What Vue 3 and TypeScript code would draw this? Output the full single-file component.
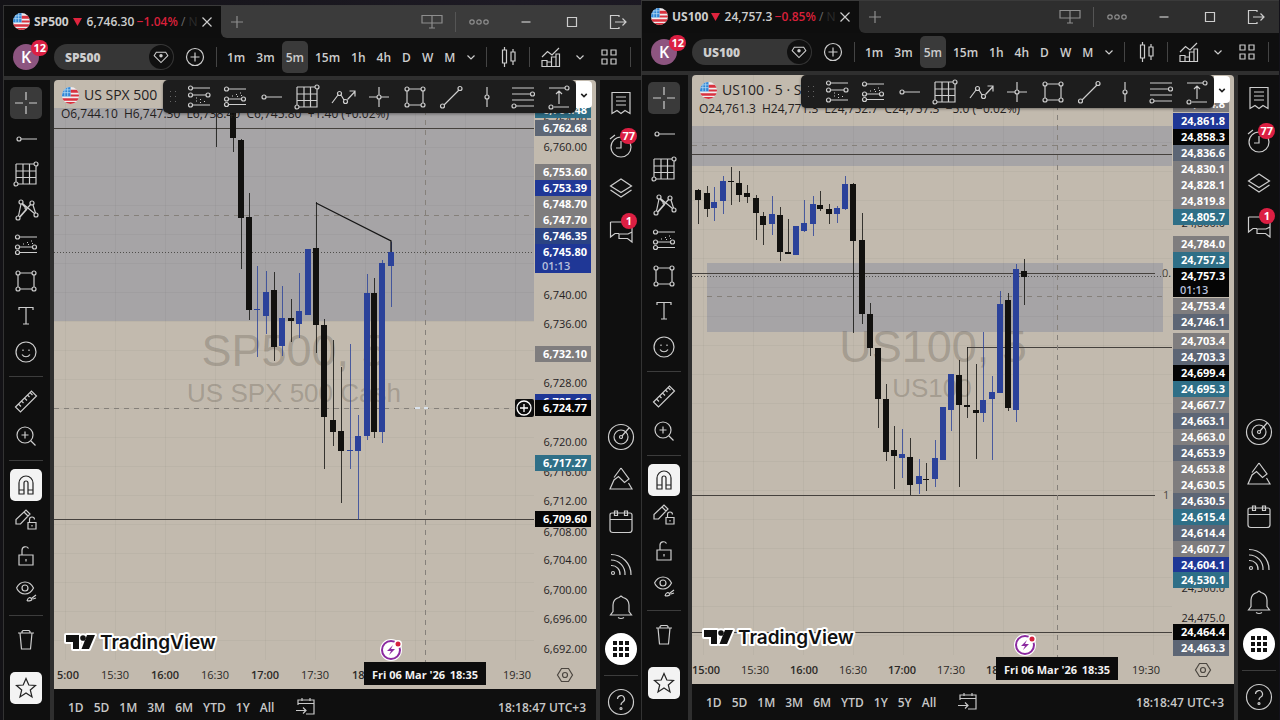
<script setup lang="ts">
type Tone = 'plain' | 'slate' | 'gray' | 'blue' | 'navy' | 'teal' | 'black'
type Candle = [x: number, top: number, bottom: number, high: number, low: number, up: 0 | 1]
interface PriceTag { y: number; text: string; tone: Tone; timer?: string }
interface HLine { y: number; from: number; to: number; kind: 'solid' | 'dashed' | 'dotted' }
interface Pane {
  id: string
  symbol: string
  price: string
  change: string
  title: string
  ohlc: string
  x: number
  y: number
  zones: { x: number; y: number; w: number; h: number }[]
  lines: HLine[]
  candles: Candle[]
  tags: PriceTag[]
  mark: { text: string; x: number; y: number }[]
  times: { x: number; text: string }[]
  notes: { x: number; y: number; text: string }[]
  ranges: string[]
  cursorX: number
  trend?: string
}

const ring = (x: number, y: number, r: number): string =>
  `M${x - r} ${y}a${r} ${r} 0 1 0 ${2 * r} 0a${r} ${r} 0 1 0 ${-2 * r} 0`

const icons: Record<string, string> = {
  cross: 'M14 3v8M14 17v8M3 14h8M17 14h8',
  ray: ring(7, 14, 2) + 'M9 14H25',
  grid: 'M4 4H22M24 6V24H6M4 22V4M11 4V24M17.500 4V24M4 11H24M4 17.500H24' + ring(24, 4, 2) + ring(4, 24, 2),
  xabcd: 'M6.500 20L9 8M8 20.500L18.500 8.500M10.500 7.500L22.500 17.500M21 9L23.500 17M10 8L13 11M15 13L8 21' + ring(6, 22, 2) + ring(9, 6, 2) + ring(20, 7, 2) + ring(24, 19, 2) + ring(14, 12, 1),
  channel: 'M7.500 6H25M7.500 16H20.500M7.500 21.500H25M11 13h1M15 11.500h1M19 10h1M16 13.500h1M20 12.500h1' + ring(5.5, 6, 2) + ring(5.5, 16, 2) + ring(22.5, 16, 2) + ring(5.5, 21.5, 2),
  retrace: 'M7.500 5H25M7.500 12H21M7.500 22H25M11 15h1M15 16.500h1M19 18.500h1M11 18h1M15 19.500h1' + ring(5.5, 5, 2) + ring(5.5, 12, 2) + ring(23, 12, 2) + ring(5.5, 22, 2),
  rect: 'M8 6H20M22 8V20M20 22H8M6 20V8' + ring(6, 6, 2) + ring(22, 6, 2) + ring(22, 22, 2) + ring(6, 22, 2),
  text: 'M7 8V5.500H21V8M14 5.500V22M11 22H17',
  smile: ring(14, 14, 10) + 'M11 11.500v1.500M17 11.500v1.500M10 16.500c2 3 6 3 8 0',
  ruler: 'M3.500 20L19.500 4L24.500 9L8.500 25ZM6.500 17l2.500 2.500M9.500 14l2 2M12.500 11l2.500 2.500M15.500 8l2 2M18 5.500l2.500 2.500',
  zoom: ring(13, 13, 8) + 'M13 9.500v7M9.500 13h7M19 19l4.500 4.500',
  magnet: 'M7 23V12a7 7 0 0 1 14 0V23H16V12a2 2 0 0 0-4 0V23ZM7 19h5M16 19h5',
  penlock: 'M4 18V13.500L14 4L18 8L8.500 18ZM12 6L16 10M16 16.500h8v6.500h-8zM17.500 16.500v-3a2.500 2.500 0 0 1 5 0M20 19v1.500',
  lock: 'M7 13h14v10H7zM10 13V8.500a3.500 3.500 0 0 1 6.500-2M14 17v2.500',
  eye: 'M4.500 11c4-8 13-8 17 0c-4 8-13 8-17 0' + ring(13, 11, 3) + 'M15 24c1-4 3-4 5-2c0 2-3 2-5 2M20 21l4-3M21 22l3-1',
  trash: 'M6 7H22M10 7V5.500L11 4.500H17L18 5.500V7M8 7L9.500 23H18.500L20 7',
  star: 'M14 4.500L16.800 11L23.500 11.500L18.300 16L20 23L14 19L8 23L9.700 16L4.500 11.500L11.200 11Z',
  path: 'M3 20L9 12M12 12L15 17M18.500 16.500L26 8.500M20.500 8H26V13.500' + ring(10.5, 10.5, 2) + ring(16.5, 18.5, 2),
  plusring: ring(14, 14, 2) + 'M14 4v8M14 16v8M4 14h8M16 14h8',
  trend: 'M7 22L22 7' + ring(5.5, 23, 2) + ring(23, 5.5, 2),
  vline: 'M14 4V12M14 16V24' + ring(14, 14, 2),
  levels: 'M3 5H25M3 11H21.500M3 17H25M7 23H25' + ring(23.5, 11, 2) + ring(5, 23, 2),
  longpos: 'M4 5H20M9 24H24M14 21V8M11 11L14 8L17 11' + ring(22, 5, 2) + ring(6, 24, 2),
  note: 'M5 3.500H23V24.500L18 21.500L14 24.500L10 21.500L5 24.500ZM9 8H19M9 12H19M9 16H19',
  alarm: ring(14, 15, 10) + 'M14 9V16H9M3 7L8 3',
  layers: 'M3.500 12L14 5L24.500 12L14 18.500ZM3.500 16L14 23L24.500 16',
  chat: 'M3.500 5H20V11M3.500 5V20L8 16.500H12M25 11V25L20.500 21.500H12V17H21L25 15',
  radar: ring(14, 14, 12.5) + ring(14, 14, 7) + ring(14, 14, 1.5) + 'M15 13L22 5',
  ideas: 'M14 3L22 14L17.500 17.500L11.500 11.500L7 15L3 24H25L21.500 18M14 3L7 12.500',
  calendar: 'M3 7Q3 5 5 5H23Q25 5 25 7V22Q25 24.500 22 24.500H6Q3 24.500 3 22ZM3 11.500H25M7.500 3h3v4.500h-3zM17.500 3h3v4.500h-3z',
  rss: ring(6, 23, 1.5) + 'M4 15.500a8.500 8.500 0 0 1 9 9.500M4 10a14 14 0 0 1 14 15M4 4.500a20 20 0 0 1 20 20.500',
  bell: 'M3.500 22H24.500L22 18.500V12a8 8 0 0 0-6-7.500L14 3L12 4.500A8 8 0 0 0 6 12V18.500ZM11 24.500q3 2 6 0',
  help: ring(14, 14, 12.5) + 'M10.500 11a3.500 3.500 0 1 1 5 3.200Q14 15 14 17' + ring(14, 20.5, 1),
  add: ring(14, 14, 8.5) + 'M14 9.500v9M9.500 14h9',
  gem: 'M8.500 8.500H19.500L22 12.500L14 20.500L6 12.500Z',
  candles: 'M8.500 7H12.500V20H8.500ZM10.500 4V7M10.500 20V24M17 9H21V18H17ZM19 6V9M19 18V22',
  indicator: 'M5 23.500V17.500H10V23.500ZM10 23.500V19H14.500V23.500M14.500 19V14H19V23.500M19 14V11H22.500V23.500H10M5 14L10.500 8.500L15 12L22 5',
  apps: 'M7 7h5v5h-5zM16 7h5v5h-5zM7 16h5v5h-5zM16 16h5v5h-5z',
  layout: 'M4 7.500H24V15H4ZM14 7.500V20M11 20H17',
  dots: ring(7, 14, 2.2) + ring(14, 14, 2.2) + ring(21, 14, 2.2),
  minus: 'M9.500 14H18.500',
  square: 'M9.500 9.500h9v9h-9z',
  exit: 'M15 9V7.500H6.500V20.500H15V19M11 14H22M18.500 10.500L22 14L18.500 17.500',
  down: 'M10.500 12.500L14 16L17.500 12.500',
  close: 'M9.500 9.500L18.500 18.500M18.500 9.500L9.500 18.500',
  plus: 'M14 8v12M8 14h12',
  goto: 'M6 12V7H22V21H14M6 10.500H22M10 5V8M18 5V8M4 17.500H14M11 14.500L14 17.500L11 20.500',
  lens: 'M10.500 7.500H17.500L21.500 14L17.500 20.500H10.500L6.500 14Z' + ring(14, 14, 2.5),
  brand: 'M0 1H13V15H7V8H0ZM21 1H29L23 15H15.500Z' + ring(17, 4, 2.8),
}

const drawTools: string[][] = [
  ['cross', 'ray', 'grid', 'xabcd', 'channel', 'rect', 'text', 'smile'],
  ['ruler', 'zoom'],
  ['magnet', 'penlock', 'lock', 'eye'],
  ['trash'],
]
const favorites = ['retrace', 'channel', 'ray', 'grid', 'path', 'plusring', 'rect', 'trend', 'vline', 'levels', 'longpos']
const sideTop = [
  { icon: 'note', badge: '' },
  { icon: 'alarm', badge: '77' },
  { icon: 'layers', badge: '' },
  { icon: 'chat', badge: '1' },
]
const sideBottom = ['radar', 'ideas', 'calendar', 'rss', 'bell']
const intervals = ['1m', '3m', '5m', '15m', '1h', '4h', 'D', 'W', 'M']

const tag = (y: number, text: string, tone: Tone = 'plain', timer?: string): PriceTag => ({ y, text, tone, timer })

const panes: Pane[] = [
  {
    id: 'spx', symbol: 'SP500', price: '6,746.30', change: '−1.04%', title: 'US SPX 500',
    ohlc: 'O6,744.10  H6,747.30  L6,738.40  C6,745.80  +1.40 (+0.02%)',
    x: 54, y: 80,
    zones: [{ x: 54, y: 108, w: 480, h: 213 }],
    lines: [
      { y: 128, from: 54, to: 534, kind: 'solid' },
      { y: 215, from: 54, to: 534, kind: 'dashed' },
      { y: 252, from: 54, to: 534, kind: 'dotted' },
      { y: 408, from: 54, to: 514, kind: 'dashed' },
      { y: 519, from: 54, to: 534, kind: 'solid' },
    ],
    candles: [
      [216, 110, 111, 110, 147, 0], [233, 110, 138, 110, 152, 0], [241, 140, 218, 139, 269, 0],
      [249, 217, 310, 193, 320, 0], [257, 309, 310, 266, 357, 1], [266, 292, 316, 271, 334, 1],
      [274, 290, 347, 272, 361, 0], [282, 318, 346, 286, 356, 1], [291, 318, 321, 299, 342, 0],
      [299, 311, 324, 273, 338, 1], [308, 249, 315, 249, 315, 1], [316, 248, 325, 202, 353, 0],
      [324, 325, 417, 319, 469, 0], [333, 420, 432, 340, 446, 0], [341, 431, 451, 367, 503, 0],
      [350, 450, 451, 344, 469, 1], [358, 436, 451, 415, 520, 1], [367, 293, 436, 274, 440, 1],
      [374, 293, 432, 278, 438, 0], [382, 263, 432, 260, 443, 1], [391, 252, 266, 242, 307, 1],
    ],
    tags: [
      tag(120, '6,764.00'), tag(110, '6,764.48', 'teal'), tag(128, '6,762.68', 'slate'), tag(147, '6,760.00'),
      tag(172, '6,753.60', 'gray'), tag(188, '6,753.39', 'blue'), tag(204, '6,748.70', 'gray'),
      tag(220, '6,747.70', 'gray'), tag(236, '6,746.35', 'navy'), tag(252, '6,745.80', 'blue', '01:13'),
      tag(295, '6,740.00'), tag(324, '6,736.00'), tag(354, '6,732.10', 'gray'), tag(383, '6,728.00'),
      tag(402, '6,725.68', 'blue'), tag(408, '6,724.77', 'black'), tag(442, '6,720.00'), tag(472, '6,716.00'),
      tag(463, '6,717.27', 'teal'), tag(501, '6,712.00'), tag(532, '6,708.00'), tag(519, '6,709.60', 'black'),
      tag(560, '6,704.00'), tag(590, '6,700.00'), tag(619, '6,696.00'), tag(649, '6,692.00'),
    ],
    mark: [{ text: 'SP500, 5', x: 294, y: 366 }, { text: 'US SPX 500 Cash', x: 294, y: 402 }],
    times: [
      { x: 68, text: '5:00' }, { x: 115, text: '15:30' }, { x: 165, text: '16:00' }, { x: 215, text: '16:30' },
      { x: 265, text: '17:00' }, { x: 315, text: '17:30' }, { x: 366, text: '18:00' }, { x: 517, text: '19:30' },
    ],
    notes: [],
    ranges: ['1D', '5D', '1M', '3M', '6M', 'YTD', '1Y', 'All'],
    cursorX: 425,
    trend: 'M316 203L391 241V252',
  },
  {
    id: 'ndx', symbol: 'US100', price: '24,757.3', change: '−0.85%', title: 'US100 · 5 · S',
    ohlc: 'O24,761.3  H24,771.3  L24,752.7  C24,757.3  −5.0 (−0.02%)',
    x: 692, y: 75,
    zones: [{ x: 692, y: 126, w: 480, h: 40 }, { x: 707, y: 263, w: 456, h: 69 }],
    lines: [
      { y: 145, from: 692, to: 1172, kind: 'dashed' },
      { y: 154, from: 692, to: 1172, kind: 'solid' },
      { y: 273, from: 692, to: 1155, kind: 'solid' },
      { y: 276, from: 692, to: 1172, kind: 'dotted' },
      { y: 296, from: 707, to: 1163, kind: 'dashed' },
      { y: 347, from: 967, to: 1172, kind: 'solid' },
      { y: 495, from: 692, to: 1155, kind: 'solid' },
      { y: 632, from: 692, to: 1172, kind: 'solid' },
    ],
    candles: [
      [698, 190, 200, 189, 224, 0], [707, 193, 209, 186, 217, 0], [714, 202, 208, 187, 221, 1],
      [723, 181, 201, 176, 214, 1], [731, 181, 182, 167, 205, 0], [739, 183, 195, 171, 202, 0],
      [747, 193, 197, 185, 203, 0], [756, 198, 213, 195, 240, 0], [763, 216, 225, 212, 245, 0],
      [772, 214, 224, 196, 235, 1], [780, 215, 252, 207, 261, 0], [788, 252, 254, 219, 254, 0],
      [796, 226, 255, 226, 255, 1], [804, 223, 231, 200, 232, 1], [813, 204, 224, 196, 236, 1],
      [820, 205, 209, 191, 211, 0], [829, 209, 214, 204, 224, 0], [837, 208, 214, 206, 223, 1],
      [845, 184, 209, 176, 210, 1], [853, 184, 241, 183, 333, 0], [862, 240, 314, 213, 324, 0],
      [870, 314, 348, 303, 356, 0], [878, 348, 399, 348, 428, 0], [886, 399, 452, 384, 461, 0],
      [894, 450, 456, 426, 489, 0], [902, 454, 458, 429, 478, 1], [910, 457, 485, 438, 495, 0],
      [919, 476, 484, 459, 494, 1], [926, 479, 480, 463, 491, 0], [935, 458, 479, 440, 487, 1],
      [943, 407, 460, 407, 460, 1], [951, 374, 410, 374, 431, 1], [959, 375, 405, 360, 487, 0],
      [967, 405, 407, 347, 418, 0], [976, 410, 413, 364, 459, 0], [983, 400, 413, 332, 422, 1],
      [992, 392, 399, 376, 460, 1], [1000, 304, 393, 291, 393, 1], [1008, 300, 408, 293, 411, 0],
      [1016, 269, 410, 264, 422, 1], [1024, 271, 277, 259, 305, 0],
    ],
    tags: [
      tag(104, '24,874.8', 'gray'), tag(121, '24,861.8', 'blue'), tag(137, '24,858.3', 'black'), tag(153, '24,836.6', 'slate'),
      tag(169, '24,830.1', 'gray'), tag(185, '24,828.1', 'gray'), tag(201, '24,819.8', 'gray'),
      tag(223, '24,800.0'), tag(217, '24,805.7', 'teal'), tag(253, '24,775.0'), tag(244, '24,784.0', 'gray'),
      tag(260, '24,757.3', 'teal'), tag(276, '24,757.3', 'black', '01:13'), tag(306, '24,753.4', 'gray'),
      tag(322, '24,746.1', 'slate'), tag(341, '24,703.4', 'gray'), tag(357, '24,703.3', 'slate'),
      tag(373, '24,699.4', 'black'), tag(389, '24,695.3', 'teal'), tag(405, '24,667.7', 'gray'),
      tag(421, '24,663.1', 'slate'), tag(437, '24,663.0', 'gray'), tag(453, '24,653.9', 'slate'),
      tag(469, '24,653.8', 'gray'), tag(485, '24,630.5', 'gray'), tag(501, '24,630.5', 'slate'),
      tag(517, '24,615.4', 'teal'), tag(533, '24,614.4', 'slate'), tag(549, '24,607.7', 'gray'),
      tag(565, '24,604.1', 'blue'), tag(588, '24,500.0'), tag(580, '24,530.1', 'teal'),
      tag(618, '24,475.0'), tag(632, '24,464.4', 'black'), tag(648, '24,463.3', 'slate'),
    ],
    mark: [{ text: 'US100, 5', x: 933, y: 362 }, { text: 'US100', x: 932, y: 397 }],
    times: [
      { x: 706, text: '15:00' }, { x: 755, text: '15:30' }, { x: 804, text: '16:00' }, { x: 853, text: '16:30' },
      { x: 902, text: '17:00' }, { x: 951, text: '17:30' }, { x: 1000, text: '18:00' }, { x: 1146, text: '19:30' },
    ],
    notes: [{ x: 1162, y: 277, text: '0.' }, { x: 1163, y: 499, text: '1' }],
    ranges: ['1D', '5D', '1M', '3M', '6M', 'YTD', '1Y', '5Y', 'All'],
    cursorX: 1057,
  },
]
const rowsOfGrid = Array.from({ length: 18 }, (_, i) => i)
</script>

<template>
  <main class="desktop">
    <section v-for="p in panes" :key="p.id" class="pane" :class="p.id">
      <header class="tabs">
        <div class="tab">
          <svg class="flag" viewBox="0 0 18 18"><use href="#us-flag" /></svg>
          <b>{{ p.symbol }}</b>
          <svg class="fall" viewBox="0 0 10 10"><path d="M0 1H10L5 10Z" /></svg>
          <span class="quote">{{ p.price }}</span>
          <span class="loss">{{ p.change }}</span>
          <span class="rest">/ <i>N</i></span>
          <button class="ico" aria-label="Close tab"><svg viewBox="0 0 28 28"><path :d="icons.close" /></svg></button>
        </div>
        <div class="strip">
          <button class="ico dim" aria-label="New tab"><svg viewBox="0 0 28 28"><path :d="icons.plus" /></svg></button>
          <div class="window-tools">
            <button class="ico dim" aria-label="Layout"><svg viewBox="0 0 28 28"><path :d="icons.layout" /></svg></button>
            <i class="bar"></i>
            <button class="ico dim" aria-label="More"><svg viewBox="0 0 28 28"><path :d="icons.dots" /></svg></button>
            <button v-for="w in ['minus', 'square', 'exit']" :key="w" class="ico win" :aria-label="w">
              <svg viewBox="0 0 28 28"><path :d="icons[w]" /></svg>
            </button>
          </div>
        </div>
      </header>

      <nav class="toolbar">
        <button class="avatar">K<span class="badge">12</span></button>
        <button class="search">
          <b>{{ p.symbol }}</b>
          <span class="gem"><svg viewBox="0 0 28 28"><path :d="icons.gem" /><circle cx="14" cy="12.500" r="2" class="dot" /></svg></span>
        </button>
        <button class="ico" aria-label="Compare"><svg viewBox="0 0 28 28"><path :d="icons.add" /></svg></button>
        <i class="bar"></i>
        <div class="intervals">
          <button v-for="t in intervals" :key="t" :class="{ on: t === '5m' }">{{ t }}</button>
        </div>
        <div class="right-tools">
          <button class="ico slim" aria-label="Intervals"><svg viewBox="0 0 28 28"><path :d="icons.down" /></svg></button>
          <i class="bar"></i>
          <button class="ico" aria-label="Chart type"><svg viewBox="0 0 28 28"><path :d="icons.candles" /></svg></button>
          <i class="bar"></i>
          <button class="ico" aria-label="Indicators"><svg viewBox="0 0 28 28"><path :d="icons.indicator" /></svg></button>
          <button class="ico slim" aria-label="Templates"><svg viewBox="0 0 28 28"><path :d="icons.down" /></svg></button>
          <button class="ico" aria-label="Layouts"><svg viewBox="0 0 28 28"><path :d="icons.apps" /></svg></button>
          <i class="bar"></i>
        </div>
      </nav>

      <div class="body">
        <aside class="draw">
          <template v-for="(group, gi) in drawTools" :key="gi">
            <hr v-if="gi" />
            <div class="group" :class="'g' + gi">
              <button v-for="t in group" :key="t" class="tool" :class="{ on: t === 'cross', lit: t === 'magnet' }" :aria-label="t">
                <svg viewBox="0 0 28 28"><path :d="icons[t]" /></svg>
              </button>
            </div>
          </template>
          <button class="tool lit fav" aria-label="Favorites"><svg viewBox="0 0 28 28"><path :d="icons.star" /></svg></button>
        </aside>

        <div class="center">
          <div class="chart">
            <svg class="canvas" :viewBox="`${p.x} ${p.y} 542 609`" preserveAspectRatio="xMidYMid slice">
              <rect v-for="(z, i) in p.zones" :key="'z' + i" class="zone" :x="z.x" :y="z.y" :width="z.w" :height="z.h" />
              <g class="mesh">
                <path v-for="i in rowsOfGrid" :key="'h' + i" :d="`M${p.x} ${p.y + 67 + i * 29}H${p.x + 480}`" />
                <path v-for="i in 10" :key="'v' + i" :d="`M${p.x + 11 + (i - 1) * 50} ${p.y}V${p.y + 580}`" />
              </g>
              <text v-for="(m, i) in p.mark" :key="'m' + i" class="mark" :class="{ sub: i === 1 }" :x="m.x" :y="m.y">{{ m.text }}</text>
              <path v-for="(l, i) in p.lines" :key="'l' + i" class="rule" :class="l.kind" :d="`M${l.from} ${l.y}H${l.to}`" />
              <path class="rule dashed" :d="`M${p.cursorX} ${p.y + 30}V${p.y + 583}`" />
              <g v-for="(c, i) in p.candles" :key="'c' + i" :class="c[5] ? 'up' : 'down'">
                <rect class="wick" :x="c[0]" :y="c[3]" width="1" :height="c[4] - c[3]" />
                <rect :x="c[0] - 3" :y="c[1]" width="6" :height="c[2] - c[1]" />
              </g>
              <path v-if="p.trend" class="trend" :d="p.trend" />
              <path v-if="p.trend" class="pointer" d="M415 408H420M424 408H428" />
              <text class="ohlc" :x="p.x + 7" :y="p.y + 38">{{ p.ohlc }}</text>
              <text v-for="n in p.notes" :key="n.text" class="note" :x="n.x" :y="n.y">{{ n.text }}</text>
              <g v-for="(t, i) in p.tags" :key="'t' + i" class="tag" :class="t.tone">
                <rect v-if="t.tone !== 'plain'" :x="p.x + 481" :y="t.y - 8" width="56" :height="t.timer ? 29 : 16" />
                <text :x="p.x + 533" :y="t.y + 4">{{ t.text }}</text>
                <text v-if="t.timer" class="timer" :x="p.x + 488" :y="t.y + 18">{{ t.timer }}</text>
              </g>
              <g v-if="p.trend" class="quick">
                <rect x="515" y="399" width="19" height="18" rx="2" />
                <circle cx="524" cy="408" r="7" /><path d="M524 404V412M520 408H528" />
              </g>
              <g class="brand" :transform="`translate(${p.x + 12} ${p.y + 554})`">
                <path :d="icons.brand" />
                <text x="34" y="15">TradingView</text>
              </g>
              <g class="event" :transform="`translate(${p.x + (p.trend ? 337 : 333)} ${p.y + 570})`">
                <circle r="11" class="halo" /><circle r="9" class="hoop" />
                <path d="M2 -5L-4 1H0L-2 5L4 -1H0Z" /><circle cx="7" cy="-6" r="4" class="halo" /><circle cx="7" cy="-6" r="2.500" class="alert" />
              </g>
              <text v-for="(t, i) in p.times" :key="'x' + i" class="time" :class="{ hour: i % 2 === 0 }" :x="t.x" :y="p.y + 599">{{ t.text }}</text>
              <g class="stamp">
                <rect :x="p.x + (p.trend ? 310 : 304)" :y="p.y + 582" width="122" height="23" />
                <text :x="p.x + (p.trend ? 318 : 312)" :y="p.y + 599">Fri 06 Mar '26</text>
                <text :x="p.x + (p.trend ? 424 : 418)" :y="p.y + 599" class="end">18:35</text>
              </g>
              <path class="lens" :transform="`translate(${p.x + 497} ${p.y + 581})`" :d="icons.lens" />
            </svg>
            <div class="legend">
              <svg class="flag" viewBox="0 0 18 18"><use href="#us-flag" /></svg>
              <span>{{ p.title }}</span>
            </div>
            <div class="favorites">
              <svg class="grip" viewBox="0 0 8 14"><path d="M1 1h1v1h-1zM6 1h1v1h-1zM1 6h1v1h-1zM6 6h1v1h-1zM1 11h1v1h-1zM6 11h1v1h-1z" /></svg>
              <button v-for="f in favorites" :key="f" :aria-label="f"><svg viewBox="0 0 28 28"><path :d="icons[f]" /></svg></button>
            </div>
            <button class="unit" aria-label="Currency"><svg viewBox="0 0 28 28"><path :d="icons.down" /></svg></button>
          </div>
          <footer class="ranges">
            <button v-for="r in p.ranges" :key="r">{{ r }}</button>
            <button class="ico goto" aria-label="Go to date"><svg viewBox="0 0 28 28"><path :d="icons.goto" /></svg></button>
            <button class="clock">18:18:47 UTC+3</button>
          </footer>
        </div>

        <aside class="side">
          <div class="stack top">
            <button v-for="s in sideTop" :key="s.icon" class="tool" :aria-label="s.icon">
              <svg viewBox="0 0 28 28"><path :d="icons[s.icon]" /></svg>
              <span v-if="s.badge" class="badge">{{ s.badge }}</span>
            </button>
          </div>
          <div class="stack bottom">
            <button v-for="s in sideBottom" :key="s" class="tool" :aria-label="s">
              <svg viewBox="0 0 28 28"><path :d="icons[s]" /></svg>
            </button>
            <button class="tool round" aria-label="Products">
              <svg viewBox="0 0 28 28"><path class="dot" d="M6 6h4v4h-4zM12 6h4v4h-4zM18 6h4v4h-4zM6 12h4v4h-4zM12 12h4v4h-4zM18 12h4v4h-4zM6 18h4v4h-4zM12 18h4v4h-4zM18 18h4v4h-4z" /></svg>
            </button>
          </div>
          <hr />
          <button class="tool" aria-label="Help"><svg viewBox="0 0 28 28"><path :d="icons.help" /></svg></button>
        </aside>
      </div>
    </section>

    <svg class="defs" aria-hidden="true">
      <symbol id="us-flag" viewBox="0 0 18 18">
        <clipPath id="disc"><circle cx="9" cy="9" r="9" /></clipPath>
        <g clip-path="url(#disc)">
          <rect width="18" height="18" fill="#f0eef0" />
          <path d="M9 3H18V6H9ZM9 8H18V10H9ZM0 12H18V14.500H0ZM0 16H18V18H0Z" fill="#d8323f" />
          <rect width="9" height="10" fill="#2f86d6" />
          <path d="M3 0V10M6 0V10M0 3H9M0 6H9" stroke="#b7dcf5" stroke-width="0.800" />
        </g>
      </symbol>
    </svg>
  </main>
</template>

<style>
body { margin: 0; background: #17151b; }
</style>

<style scoped>
.desktop {
  display: grid;
  grid-template-columns: 1fr 1fr;
  height: 100vh;
  overflow: hidden;
  box-sizing: border-box;
  padding: 0 1px 0 3px;
  background: linear-gradient(90deg, #131216, #1d1a24 40%, #14121a);
  font-family: "Open Sans", "Noto Sans", sans-serif;
  font-size: 12px;
  color: #cdcdcd;
}
.pane {
  height: 100vh;
  min-width: 0;
  box-sizing: border-box;
  display: flex;
  flex-direction: column;
  background: #2f2f2f;
  border-left: 1px solid #333;
  border-top: 1px solid #3a3a3a;
}
.spx { margin-top: 5px; }
button {
  font: inherit;
  color: inherit;
  background: none;
  border: 0;
  padding: 0;
  display: flex;
  align-items: center;
  justify-content: center;
  position: relative;
}
svg { display: block; fill: none; stroke: currentColor; stroke-width: 1.2; }
.defs { position: absolute; width: 0; height: 0; }
.flag { width: 17px; height: 17px; stroke: none; flex: none; }
.ico { width: 28px; height: 28px; flex: none; }
.ico svg { width: 28px; height: 28px; flex: none; }
.slim { width: 16px; }
.dim { color: #8e8e8e; }
.dot { fill: currentColor; stroke: none; }
.bar { width: 1px; height: 20px; background: #444; flex: none; }
hr { border: 0; height: 1px; background: #3c3c3c; margin: 0; width: 34px; }

.tabs { display: flex; height: 32px; flex: none; background: #0e0e0e; }
.tab { width: 217px; box-sizing: border-box; padding: 0 0 1px 9px; display: flex; align-items: center; white-space: nowrap; }
.tab b { margin-left: 4px; width: 40px; }
.tab .fall { fill: #e0243e; stroke: none; width: 9px; height: 9px; margin-right: 5px; flex: none; }
.tab .quote { font-weight: 600; width: 52px; }
.tab .loss { color: #d8203a; width: 46px; font-weight: 600; }
.tab .rest { color: #6a6a6a; width: 12px; }
.tab .rest i { color: #2c2c2c; font-style: normal; }
.strip { flex: 1; display: flex; justify-content: space-between; align-items: center; background: #3b3b3b; border-bottom-left-radius: 6px; padding-left: 2px; }
.ndx .strip { background: #2e2e2e; }
.window-tools { display: flex; align-items: center; }
.window-tools .bar { margin: 0 9px; background: #555; }
.win { width: 46px; }
.window-tools .dim + .win { margin-left: 10px; }

.toolbar { display: flex; align-items: center; height: 38px; flex: none; background: #0f0f0f; padding: 0 10px 0 9px; margin-bottom: 4px; font-weight: 600; }
.avatar { width: 26px; height: 26px; border-radius: 13px; background: #8d5580; color: #fff; font-size: 16px; margin-right: 15px; flex: none; }
.badge {
  position: absolute;
  top: -4px;
  right: -9px;
  min-width: 16px;
  height: 16px;
  box-sizing: border-box;
  padding: 0 2px;
  border-radius: 8px;
  background: #dc1f43;
  color: #fff;
  font-size: 11px;
  line-height: 16px;
  font-weight: 700;
  text-align: center;
}
.search { width: 120px; height: 26px; border-radius: 13px; background: #363636; justify-content: space-between; padding: 0 1px 0 11px; box-sizing: border-box; margin-right: 7px; flex: none; }
.gem { width: 24px; height: 24px; border-radius: 12px; background: #101010; display: flex; align-items: center; justify-content: center; }
.gem svg { width: 24px; height: 24px; }
.toolbar > .bar { margin: 0 6px 0 7px; }
.intervals { display: flex; gap: 3px; }
.intervals button { height: 32px; padding: 0 4px; border-radius: 5px; }
.intervals .on { background: #3a3a3a; }
.right-tools { margin-left: auto; display: flex; align-items: center; gap: 7px; }

.body { flex: 1; min-height: 0; display: flex; gap: 4px; }
.draw { width: 46px; box-sizing: border-box; padding: 7px 2px 0 0; background: #0f0f0f; display: flex; flex-direction: column; align-items: center; gap: 8px; flex: none; }
.group { display: flex; flex-direction: column; justify-content: space-between; }
.g0 { height: 281px; }
.g1 { height: 67px; }
.g2 { height: 138px; }
.tool { width: 32px; height: 32px; border-radius: 5px; flex: none; }
.tool svg { width: 28px; height: 28px; }
.tool.on { background: #3a3a3a; }
.tool.lit { background: #f3f3f3; color: #222; }
.fav { margin-top: 8px; }

.center { flex: 1; min-width: 0; display: flex; flex-direction: column; }
.chart { position: relative; flex: 1; min-height: 0; background: #c2baae; border-radius: 4px 4px 0 0; overflow: hidden; }
.canvas { width: 100%; height: 100%; stroke: none; }
.zone { fill: #a6a4a6; }
.mesh path { stroke: #000; stroke-opacity: 0.03; stroke-width: 1; shape-rendering: crispEdges; }
.rule { stroke: #45413d; stroke-width: 1; shape-rendering: crispEdges; }
.rule.dashed { stroke: #85807a; stroke-dasharray: 5 5; }
.rule.dotted { stroke: #4f4e4b; stroke-dasharray: 1 2; }
.up { fill: #2b429a; }
.down { fill: #12110f; }
.wick { opacity: 0.8; }
.trend { stroke: #171717; stroke-width: 1.3; }
.pointer { stroke: #d9e2ec; stroke-width: 2; }
.mark { font: 45px "Liberation Sans", Arial, sans-serif; fill: #5d5449; fill-opacity: 0.3; text-anchor: middle; }
.mark.sub { font-size: 26px; }
.ohlc { font-size: 12px; fill: #24211e; white-space: pre; }
.note { font-size: 11px; fill: #4c4842; }
.tag text { font-size: 11px; font-weight: 700; fill: #fff; text-anchor: end; }
.tag.plain text { font-weight: 500; fill: #25221f; }
.tag .timer { text-anchor: start; font-weight: 600; fill: #b9c0dd; }
.slate rect { fill: #5d6675; }
.gray rect { fill: #7f7d7e; }
.blue rect { fill: #1f3796; }
.navy rect { fill: #2b4383; }
.teal rect { fill: #2f6f87; }
.black rect { fill: #050505; }
.quick rect { fill: #0d0d0d; }
.quick circle, .quick path { stroke: #fff; stroke-width: 1.3; }
.brand { fill: #111; stroke: #fff; stroke-width: 4; paint-order: stroke; stroke-linejoin: round; }
.brand text { font: 600 19px Inter, sans-serif; }
.halo { fill: #fff; }
.hoop { stroke: #8b2aa0; stroke-width: 2; }
.event path { fill: #8b2aa0; }
.alert { fill: #d5203d; }
.time { font-size: 11px; fill: #2c2926; text-anchor: middle; }
.time.hour { font-weight: 600; }
.stamp rect { fill: #0c0c0c; }
.stamp text { font-size: 11px; font-weight: 700; fill: #f2f2f2; }
.stamp .end { text-anchor: end; }
.lens { stroke: #4b4640; stroke-width: 1.2; }
.legend { position: absolute; left: 8px; top: 5px; display: flex; align-items: center; gap: 5px; font-size: 14px; line-height: 20px; color: #25221f; white-space: nowrap; }
.favorites { position: absolute; left: 109px; right: 20px; top: 0; height: 33px; background: #1d1d1d; border-radius: 5px; display: flex; align-items: center; justify-content: space-between; padding: 0 3px 0 6px; box-shadow: 0 1px 3px #0006; }
.favorites svg { width: 28px; height: 28px; }
.favorites .grip { fill: #666; stroke: none; width: 8px; height: 14px; }
.unit { position: absolute; right: 4px; top: 1px; width: 16px; height: 27px; background: #fff; color: #222; border-radius: 0 4px 4px 0; overflow: hidden; }
.unit svg { width: 22px; height: 22px; flex: none; stroke-width: 2; }

.ranges { display: flex; align-items: center; gap: 10px; height: 36px; flex: none; background: #0f0f0f; padding: 0 10px 0 14px; font-weight: 600; color: #c8c8c8; white-space: nowrap; }
.goto { margin-left: 8px; }
.clock { margin-left: auto; }

.side { width: 41px; box-sizing: border-box; padding: 7px 0 0 1px; background: #0f0f0f; display: flex; flex-direction: column; align-items: center; flex: none; }
.stack { display: flex; flex-direction: column; justify-content: space-between; }
.stack.top { height: 160px; }
.stack.bottom { height: 244px; margin-top: auto; }
.side > .tool { margin-bottom: 7px; }
.side hr { margin: 10px 0 10px; }
.side .badge { top: -2px; right: 0; }
.round { background: #fff; color: #111; border-radius: 16px; }
</style>
